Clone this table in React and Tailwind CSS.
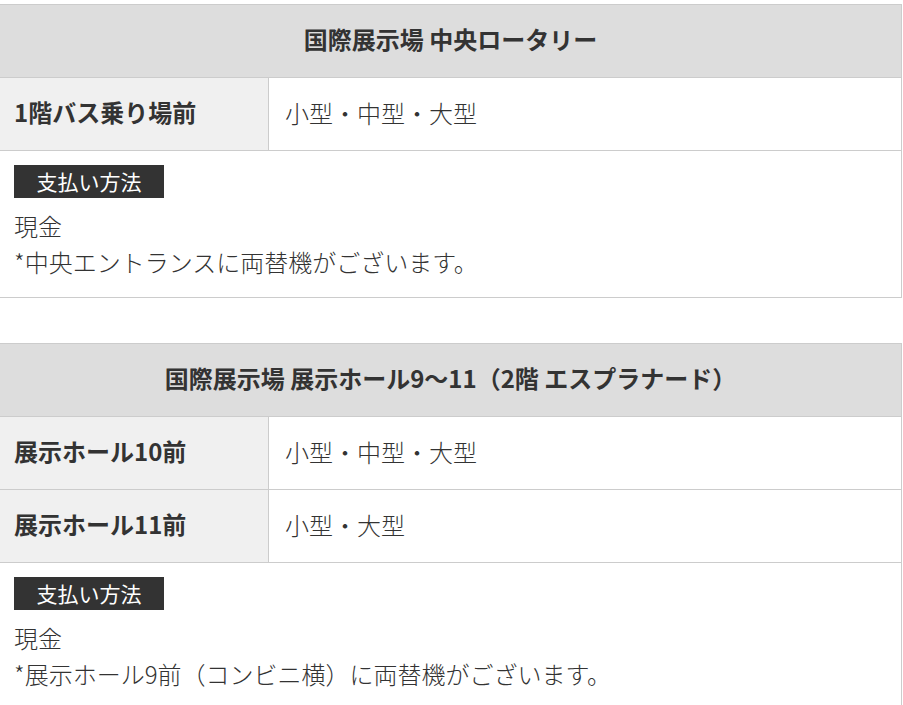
import React from "react";

const font = { fontFamily: '"Noto Sans CJK JP", "Noto Sans", sans-serif' };

function Row({ label, value }) {
  return (
    <div className="grid grid-cols-[269px_1fr] border-b border-[#cccccc] h-[73px]">
      <div className="bg-[#f0f0f0] border-r border-[#cccccc] flex items-center pl-[14px] pb-[4px] font-bold text-[24px] text-[#333333]">
        {label}
      </div>
      <div className="flex items-center pl-[16px] pb-[3px] text-[24px] font-light text-[#333333]">{value}</div>
    </div>
  );
}

function Table({ title, rows, note, last }) {
  return (
    <div className={"w-[902px] border-t border-r border-[#cccccc] " + (last ? "" : "border-b")}>
      <div className="h-[73px] bg-[#dddddd] border-b border-[#cccccc] flex items-center justify-center pb-[4px] font-bold text-[24px] text-[#333333]">
        {title}
      </div>
      {rows.map((r, i) => (
        <Row key={i} label={r[0]} value={r[1]} />
      ))}
      <div className="pt-[14px] pl-[14px] pb-[17px]">
        <div className="w-[150px] h-[33px] bg-[#333333] text-white text-[21px] flex items-center justify-center leading-none">
          支払い方法
        </div>
        <div className="mt-[10px] text-[24px] leading-[36px] font-light text-[#333333]">
          <div>現金</div>
          <div>{note}</div>
        </div>
      </div>
    </div>
  );
}

export default function App() {
  return (
    <div className="bg-white w-[903px] h-[705px] overflow-hidden pt-[4px]" style={font}>
      <Table
        title="国際展示場 中央ロータリー"
        rows={[["1階バス乗り場前", "小型・中型・大型"]]}
        note="*中央エントランスに両替機がございます。"
      />
      <div className="h-[45px]" />
      <Table
        title="国際展示場 展示ホール9～11（2階 エスプラナード）"
        rows={[
          ["展示ホール10前", "小型・中型・大型"],
          ["展示ホール11前", "小型・大型"],
        ]}
        note="*展示ホール9前（コンビニ横）に両替機がございます。"
        last
      />
    </div>
  );
}
